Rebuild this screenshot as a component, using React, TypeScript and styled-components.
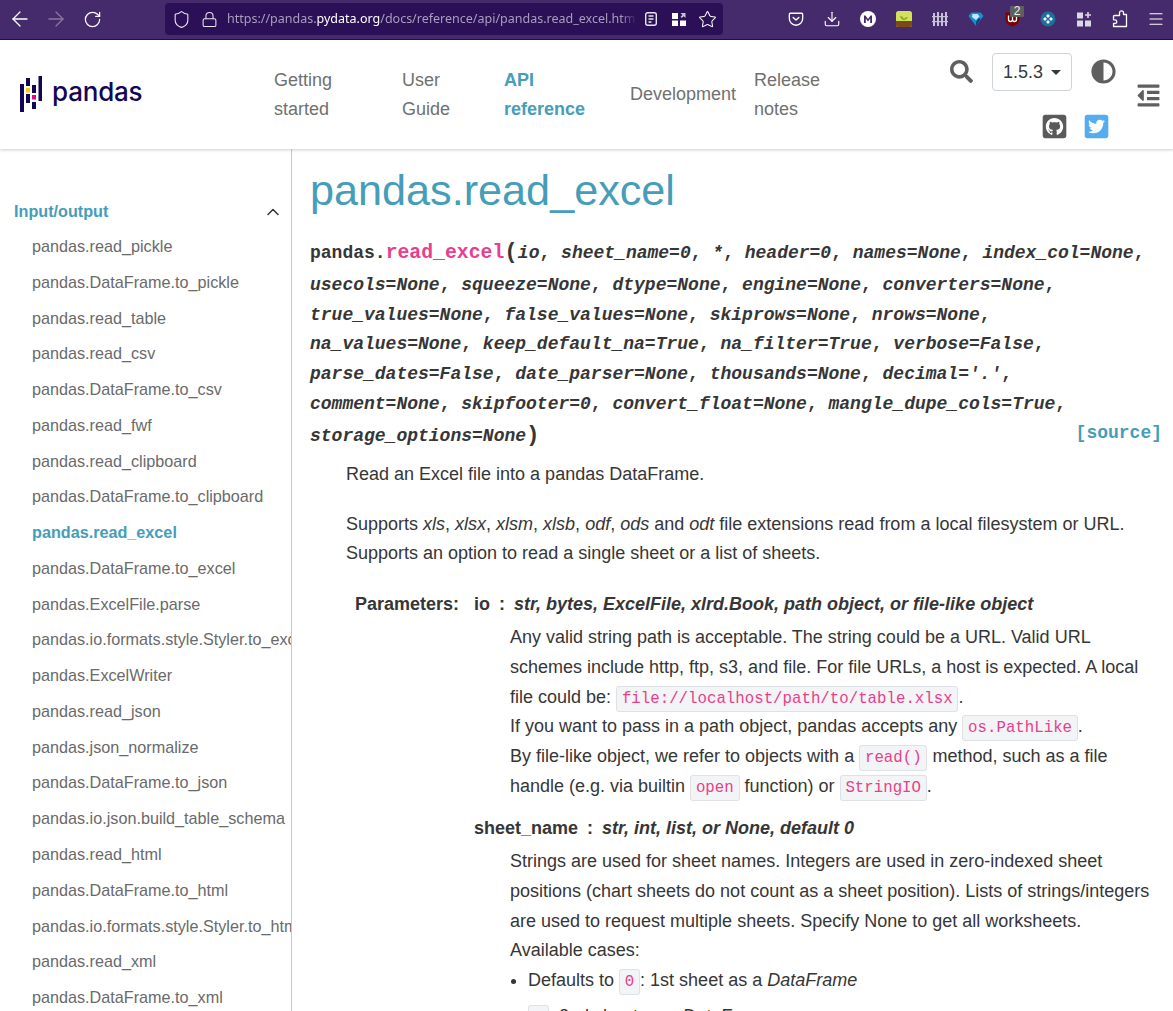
import React, { FC } from 'react'
import styled, { createGlobalStyle } from 'styled-components'
import { ArrowLeft, ArrowRight, RotateCw, Shield, Lock, Star, Download, Menu, ChevronUp } from 'lucide-react'
import { FaSearch, FaAdjust, FaGithubSquare, FaTwitterSquare, FaOutdent } from 'react-icons/fa'

const sidebarItems = [
	'pandas.read_pickle',
	'pandas.DataFrame.to_pickle',
	'pandas.read_table',
	'pandas.read_csv',
	'pandas.DataFrame.to_csv',
	'pandas.read_fwf',
	'pandas.read_clipboard',
	'pandas.DataFrame.to_clipboard',
	'pandas.read_excel',
	'pandas.DataFrame.to_excel',
	'pandas.ExcelFile.parse',
	'pandas.io.formats.style.Styler.to_excel',
	'pandas.ExcelWriter',
	'pandas.read_json',
	'pandas.json_normalize',
	'pandas.DataFrame.to_json',
	'pandas.io.json.build_table_schema',
	'pandas.read_html',
	'pandas.DataFrame.to_html',
	'pandas.io.formats.style.Styler.to_html',
	'pandas.read_xml',
	'pandas.DataFrame.to_xml',
]

const signatureParams = [
	'io', 'sheet_name=0', '*', 'header=0', 'names=None', 'index_col=None',
	'usecols=None', 'squeeze=None', 'dtype=None', 'engine=None', 'converters=None',
	'true_values=None', 'false_values=None', 'skiprows=None', 'nrows=None',
	'na_values=None', 'keep_default_na=True', 'na_filter=True', 'verbose=False',
	'parse_dates=False', 'date_parser=None', 'thousands=None', "decimal='.'",
	'comment=None', 'skipfooter=0', 'convert_float=None', 'mangle_dupe_cols=True',
	'storage_options=None',
]

const navLinks = [
	{ label: 'Getting started', width: 128 },
	{ label: 'User Guide', width: 102 },
	{ label: 'API reference', width: 126, active: true },
	{ label: 'Development', width: 124 },
	{ label: 'Release notes', width: 80 },
]

const PandasMark: FC = () => (
	<svg width="24" height="38" viewBox="0 0 24 38">
		<rect x="1" y="8" width="4" height="28" fill="#130654" />
		<rect x="7" y="2" width="4" height="8" fill="#130654" />
		<rect x="7" y="12" width="4" height="4.500" fill="#ffca00" />
		<rect x="7" y="18" width="4" height="9" fill="#130654" />
		<rect x="13" y="9" width="4" height="8" fill="#130654" />
		<rect x="13" y="19" width="4" height="4.500" fill="#e70488" />
		<rect x="13" y="26" width="4" height="7" fill="#130654" />
		<rect x="19.500" y="0" width="3.500" height="25" fill="#130654" />
	</svg>
)

const PocketIcon: FC = () => (
	<svg width="16" height="16" viewBox="0 0 18 18" fill="none" stroke="#fff" strokeWidth="1.500" strokeLinecap="round" strokeLinejoin="round">
		<path d="M2.500 2.500h13a1.500 1.500 0 0 1 1 1.500v4.500a7.500 7.500 0 0 1-15 0V4a1.500 1.500 0 0 1 1-1.500z" />
		<path d="M5.800 7.200 9 10.200l3.200-3" />
	</svg>
)

const ReaderIcon: FC = () => (
	<svg width="16" height="16" viewBox="0 0 16 16" fill="none" stroke="#e8e4f0" strokeWidth="1.400">
		<rect x="2.700" y="1.700" width="10.600" height="12.600" rx="2" />
		<path d="M5.500 5h5M5.500 8h5M5.500 11h3" />
	</svg>
)

const QrIcon: FC = () => (
	<svg width="16" height="16" viewBox="0 0 16 16" fill="#fff">
		<rect x="1" y="2" width="6" height="6" />
		<rect x="1" y="9.500" width="6" height="5.500" />
		<rect x="9" y="9.500" width="6" height="5.500" />
		<path d="M9.500 2h5v5l-1.800-1.800L10.800 7 9.500 5.800l1.900-1.900z" fill="#c9c2d8" />
	</svg>
)

const MasterIcon: FC = () => (
	<svg width="18" height="18" viewBox="0 0 18 18">
		<circle cx="9" cy="9" r="8" fill="#fff" />
		<path d="M5 13V5.500h1.400L9 9l2.600-3.500H13V13h-1.800V8.500L9 11.500 6.800 8.500V13z" fill="#452b6b" />
	</svg>
)

const SproutIcon: FC = () => (
	<svg width="16" height="16" viewBox="0 0 16 16">
		<rect width="16" height="16" rx="2.500" fill="#d3e05a" />
		<path d="M0 10h16v3.500a2.500 2.500 0 0 1-2.500 2.500h-11A2.500 2.500 0 0 1 0 13.500z" fill="#7b4a16" />
		<path d="M4 5c2 0 3 1 4 3 1-1.500 2.500-2 4-2-1 2-2.500 3-4 3-2 0-3.500-2-4-4z" fill="#8aa52e" />
	</svg>
)

const FenceIcon: FC = () => (
	<svg width="16" height="16" viewBox="0 0 16 16" fill="#c8c0d6">
		<rect x="1" y="2" width="2" height="13" />
		<rect x="5" y="1" width="2" height="14" />
		<rect x="9" y="2" width="2" height="13" />
		<rect x="13" y="1" width="2" height="14" />
		<rect x="0" y="5" width="16" height="1.200" />
		<rect x="0" y="10" width="16" height="1.200" />
	</svg>
)

const GemIcon: FC = () => (
	<svg width="16" height="16" viewBox="0 0 16 16">
		<path d="M3.500 1.500h9L15.500 5 8 15 .5 5z" fill="#1c8fd0" />
		<path d="M4.500 3h5l2 2.500L8 9 4 6z" fill="#bfeaff" />
		<path d="M8 11l3-4 1.500 1L8 15z" fill="#0a3b6a" />
	</svg>
)

const UBlockIcon: FC = () => (
	<svg width="15" height="16" viewBox="0 0 15 16">
		<path d="M.5 1.500h14v7c0 3.500-3.500 6-7 7-3.500-1-7-3.500-7-7z" fill="#800000" />
		<path d="M3.500 4.500v4a2 2 0 0 0 4 0v-3m0 3a2 2 0 0 0 4 0v-3" fill="none" stroke="#fff" strokeWidth="1.300" />
	</svg>
)

const WheelIcon: FC = () => (
	<svg width="16" height="16" viewBox="0 0 16 16">
		<circle cx="8" cy="8" r="7.500" fill="#1f6f9c" />
		<path d="M8 3l2 2-2 2-2-2zM8 9l2 2-2 2-2-2zM3 8l2-2 2 2-2 2zM9 8l2-2 2 2-2 2z" fill="#e8f4fb" />
	</svg>
)

const TilesIcon: FC = () => (
	<svg width="16" height="16" viewBox="0 0 16 16" fill="#dcd7e6">
		<rect x="1" y="1.500" width="6" height="6" />
		<rect x="1" y="9.500" width="6" height="6" />
		<rect x="9" y="9.500" width="6" height="6" />
		<path d="M11.200 1h1.600v2.200H15v1.600h-2.200V7h-1.600V4.800H9V3.200h2.200z" />
	</svg>
)

const PuzzleIcon: FC = () => (
	<svg width="16" height="18" viewBox="0 0 16 18" fill="none" stroke="#fff" strokeWidth="1.300" strokeLinejoin="round">
		<path d="M7.500 3.500V2.800a2 2 0 0 1 4 0v1.700h3v12h-13v-3h1.500a1.800 1.800 0 0 0 0-3.600H1.500v-3.400a1 1 0 0 1 1-1h5z" />
	</svg>
)

const ExtensionIcons: FC = () => (
	<Extensions>
		<ExtButton><PocketIcon /></ExtButton>
		<ExtButton><Download size={18} color="#fff" strokeWidth={1.500} /></ExtButton>
		<ExtButton><MasterIcon /></ExtButton>
		<ExtButton><SproutIcon /></ExtButton>
		<ExtButton><FenceIcon /></ExtButton>
		<ExtButton><GemIcon /></ExtButton>
		<ExtButton><UBlockIcon /><BlockBadge>2</BlockBadge></ExtButton>
		<ExtButton><WheelIcon /></ExtButton>
		<ExtButton><TilesIcon /></ExtButton>
		<ExtButton><PuzzleIcon /></ExtButton>
		<ExtButton><Menu size={18} color="#fff" strokeWidth={1.500} /></ExtButton>
	</Extensions>
)

export default function App() {
	return (
		<Page>
			<GlobalStyle />
			<BrowserBar>
				<NavButton><ArrowLeft size={24} color="#fff" strokeWidth={1.300} /></NavButton>
				<NavButton><ArrowRight size={24} color="#8a789f" strokeWidth={1.300} /></NavButton>
				<NavButton><RotateCw size={19} color="#fff" strokeWidth={1.600} /></NavButton>
				<UrlBar>
					<UrlIcon><Shield size={19} color="#e8e4f0" strokeWidth={1.400} /></UrlIcon>
					<UrlIcon><Lock size={17} color="#e8e4f0" strokeWidth={1.500} /></UrlIcon>
					<UrlText>https://pandas.<b>pydata.org</b>/docs/reference/api/pandas.read_excel.html</UrlText>
					<UrlIcon><ReaderIcon /></UrlIcon>
					<UrlIcon><QrIcon /></UrlIcon>
					<UrlIcon><Star size={19} color="#fff" strokeWidth={1.300} /></UrlIcon>
				</UrlBar>
				<ExtensionIcons />
			</BrowserBar>

			<Header>
				<Brand>
					<PandasMark />
					<BrandName>pandas</BrandName>
				</Brand>
				<Nav>
					{navLinks.map(link => (
						<NavLink key={link.label} $width={link.width} $active={link.active}>{link.label}</NavLink>
					))}
				</Nav>
				<Tools>
					<ToolRow>
						<SearchIcon><FaSearch size={23} /></SearchIcon>
						<VersionSelect>1.5.3<Caret /></VersionSelect>
						<ThemeIcon><FaAdjust size={25} /></ThemeIcon>
					</ToolRow>
					<SocialRow>
						<FaGithubSquare size={27} color="#5a5a5a" />
						<FaTwitterSquare size={27} color="#55acee" />
					</SocialRow>
				</Tools>
				<Toggle><FaOutdent size={25} /></Toggle>
			</Header>

			<Body>
				<Sidebar>
					<SectionTitle>
						<span>Input/output</span>
						<ChevronUp size={20} color="#333" strokeWidth={1.800} />
					</SectionTitle>
					{sidebarItems.map(item => (
						<SideItem key={item} $active={item === 'pandas.read_excel'}>{item}</SideItem>
					))}
				</Sidebar>

				<Main>
					<Title>pandas.read_excel</Title>
					<Signature>
						<span>pandas.</span>
						<SigName>read_excel</SigName>
						<SigParen $lineHeight={37}>(</SigParen>
						{signatureParams.map((param, i) => (
							<React.Fragment key={param}>
								<em>{param}</em>
								{i < signatureParams.length - 1 ? ', ' : ''}
							</React.Fragment>
						))}
						<SigParen $lineHeight={33}>)</SigParen>
						<SourceLink>[source]</SourceLink>
					</Signature>

					<Description>
						<Para>Read an Excel file into a pandas DataFrame.</Para>
						<Para>
							Supports <em>xls</em>, <em>xlsx</em>, <em>xlsm</em>, <em>xlsb</em>, <em>odf</em>, <em>ods</em> and <em>odt</em> file
							extensions read from a local filesystem or URL. Supports an option to read a single sheet or a list of sheets.
						</Para>

						<FieldList>
							<FieldName>Parameters:</FieldName>
							<FieldBody>
								<ParamHead>io<Separator>:</Separator><em>str, bytes, ExcelFile, xlrd.Book, path object, or file-like object</em></ParamHead>
								<ParamText>
									Any valid string path is acceptable. The string could be a URL. Valid URL schemes include http, ftp, s3, and file.
									For file URLs, a host is expected. A local file could be: <Code>file://localhost/path/to/table.xlsx</Code>.
									<br />
									If you want to pass in a path object, pandas accepts any <Code>os.PathLike</Code>.
									<br />
									By file-like object, we refer to objects with a <Code>read()</Code> method, such as a file handle (e.g. via
									builtin <Code>open</Code> function) or <Code>StringIO</Code>.
								</ParamText>
								<ParamHead>sheet_name<Separator>:</Separator><em>str, int, list, or None, default 0</em></ParamHead>
								<ParamText>
									Strings are used for sheet names. Integers are used in zero-indexed sheet positions (chart sheets do not count
									as a sheet position). Lists of strings/integers are used to request multiple sheets. Specify None to get all
									worksheets.
									<br />
									Available cases:
									<Cases>
										<li>Defaults to <Code>0</Code>: 1st sheet as a <em>DataFrame</em></li>
										<li><Code>1</Code>: 2nd sheet as a <em>DataFrame</em></li>
									</Cases>
								</ParamText>
							</FieldBody>
						</FieldList>
					</Description>
				</Main>
			</Body>
		</Page>
	)
}

const GlobalStyle = createGlobalStyle`
	html, body {
		margin: 0;
		padding: 0;
		background: #fff;
		font-family: "Liberation Sans", Arial, sans-serif;
	}
`

const Page = styled.div`
	width: 1173px;
	height: 1011px;
	overflow: hidden;
	display: flex;
	flex-direction: column;
	background: #fff;
	color: #343a40;
`

const BrowserBar = styled.div`
	height: 40px;
	flex: none;
	display: flex;
	align-items: center;
	padding: 0 0 1px 2px;
	box-sizing: border-box;
	background: #452b6b;
	border-bottom: 1px solid #23123d;
`

const NavButton = styled.div`
	width: 36px;
	flex: none;
	display: flex;
	justify-content: center;
	align-items: center;
`

const UrlBar = styled.div`
	width: 558px;
	height: 32px;
	flex: none;
	margin-left: 55px;
	padding: 0 2px;
	box-sizing: border-box;
	display: flex;
	align-items: center;
	background: #2b1057;
	border-radius: 4px;
`

const UrlIcon = styled.span`
	width: 28px;
	flex: none;
	display: flex;
	justify-content: center;
	align-items: center;
`

const UrlText = styled.div`
	flex: 1;
	min-width: 0;
	margin: 0 0 0 4px;
	overflow: hidden;
	white-space: nowrap;
	font: 12.5px/18px "Noto Sans", sans-serif;
	color: #a99fbd;
	mask-image: linear-gradient(to right, #000 96%, transparent);

	b {
		font-weight: 400;
		color: #fff;
	}
`

const Extensions = styled.div`
	display: flex;
	flex: none;
	margin-left: 55px;
`

const ExtButton = styled.div`
	position: relative;
	width: 36px;
	display: flex;
	justify-content: center;
	align-items: center;
`

const BlockBadge = styled.i`
	position: absolute;
	top: -4px;
	left: 16px;
	width: 14px;
	height: 11px;
	font: normal 12px/11px "Liberation Sans", sans-serif;
	text-align: center;
	color: #eee;
	background: #5f5f5f;
	border-radius: 1px;
`

const Header = styled.header`
	height: 109px;
	flex: none;
	position: relative;
	z-index: 1;
	display: flex;
	background: #fff;
	box-shadow: 0 1px 3px rgba(0, 0, 0, 0.2);
`

const Brand = styled.div`
	width: 274px;
	flex: none;
	padding: 36px 0 0 19px;
	box-sizing: border-box;
	display: flex;
	align-items: flex-start;
	gap: 9px;
`

const BrandName = styled.span`
	font: 500 26px/32px Inter, sans-serif;
	color: #130654;
	letter-spacing: -0.2px;
`

const Nav = styled.nav`
	display: flex;
	align-items: center;
	height: 109px;
`

const NavLink = styled.a<{ $width: number; $active?: boolean }>`
	width: ${p => p.$width}px;
	padding-right: 24px;
	box-sizing: border-box;
	font-size: 18px;
	line-height: 29px;
	font-weight: ${p => (p.$active ? 700 : 400)};
	color: ${p => (p.$active ? '#459db9' : '#707070')};
`

const Tools = styled.div`
	width: 171px;
	flex: none;
	margin-left: 115px;
	padding-top: 13px;
`

const ToolRow = styled.div`
	display: flex;
	align-items: center;
	height: 38px;
`

const SearchIcon = styled.span`
	display: flex;
	color: #5f5f5f;
	margin: -2px 19px 0 1px;
`

const VersionSelect = styled.div`
	width: 80px;
	height: 38px;
	box-sizing: border-box;
	padding: 0 10px;
	display: flex;
	align-items: center;
	justify-content: space-between;
	font-size: 18px;
	color: #343a40;
	border: 1px solid #ced4da;
	border-radius: 4px;
`

const Caret = styled.span`
	width: 0;
	height: 0;
	border-left: 5px solid transparent;
	border-right: 5px solid transparent;
	border-top: 5px solid #343a40;
`

const ThemeIcon = styled.span`
	display: flex;
	color: #5f5f5f;
	margin: -1px 0 0 19px;
`

const SocialRow = styled.div`
	display: flex;
	gap: 15px;
	margin-top: 22px;
	padding-left: 92px;
`

const Toggle = styled.div`
	margin: 43px 0 0 16px;
	color: #5f5f5f;
`

const Body = styled.div`
	flex: 1;
	min-height: 0;
	display: flex;
`

const Sidebar = styled.aside`
	width: 292px;
	flex: none;
	box-sizing: border-box;
	padding-top: 45px;
	border-right: 1px solid #c9c9c9;
	overflow: hidden;
`

const SectionTitle = styled.div`
	height: 35px;
	padding: 0 8px 0 14px;
	display: flex;
	align-items: center;
	justify-content: space-between;
	font-size: 16.2px;
	font-weight: 700;
	color: #459db9;
`

const SideItem = styled.div<{ $active?: boolean }>`
	height: 35.77px;
	line-height: 35.77px;
	padding-left: 32px;
	white-space: nowrap;
	font-size: 16.2px;
	font-weight: ${p => (p.$active ? 700 : 400)};
	color: ${p => (p.$active ? '#459db9' : '#6a6a6a')};
`

const Main = styled.main`
	flex: 1;
	min-width: 0;
	padding: 0 11px 0 18px;
`

const Title = styled.h1`
	margin: 15px 0 0;
	font-size: 43.2px;
	line-height: 52px;
	font-weight: 400;
	color: #459db9;
`

const Signature = styled.div`
	position: relative;
	margin-top: 17.8px;
	font: 700 18px/29.7px "Liberation Mono", monospace;
	color: #363636;
`

const SigName = styled.span`
	font-size: 19.8px;
	color: #e83e8c;
`

const SigParen = styled.span<{ $lineHeight: number }>`
	font-size: 22.5px;
	line-height: ${p => p.$lineHeight}px;
`

const SourceLink = styled.span`
	position: absolute;
	right: 0;
	bottom: 4px;
	color: #459db9;
`

const Description = styled.div`
	margin: 7.7px 0 0 36px;
	font-size: 18px;
	line-height: 29.7px;
	color: #363636;
`

const Para = styled.p`
	margin: 0 0 20px;
`

const FieldList = styled.div`
	display: grid;
	grid-template-columns: 128px 1fr;
	margin-top: 21px;
`

const FieldName = styled.div`
	padding-left: 9px;
	font-weight: 700;
`

const FieldBody = styled.div`
	min-width: 0;
`

const ParamHead = styled.div`
	font-weight: 700;
	margin-bottom: 3.3px;
`

const Separator = styled.span`
	margin: 0 9px;
`

const ParamText = styled.div`
	margin: 0 0 13px 36px;
`

const Code = styled.code`
	padding: 3px 4.8px;
	font: 15.75px "Liberation Mono", monospace;
	color: #e83e8c;
	background: #f3f4f5;
	border: 1px solid #dee2e6;
	border-radius: 3px;
`

const Cases = styled.ul`
	margin: 0;
	padding-left: 18px;

	li + li {
		margin-top: 6px;
	}
`
